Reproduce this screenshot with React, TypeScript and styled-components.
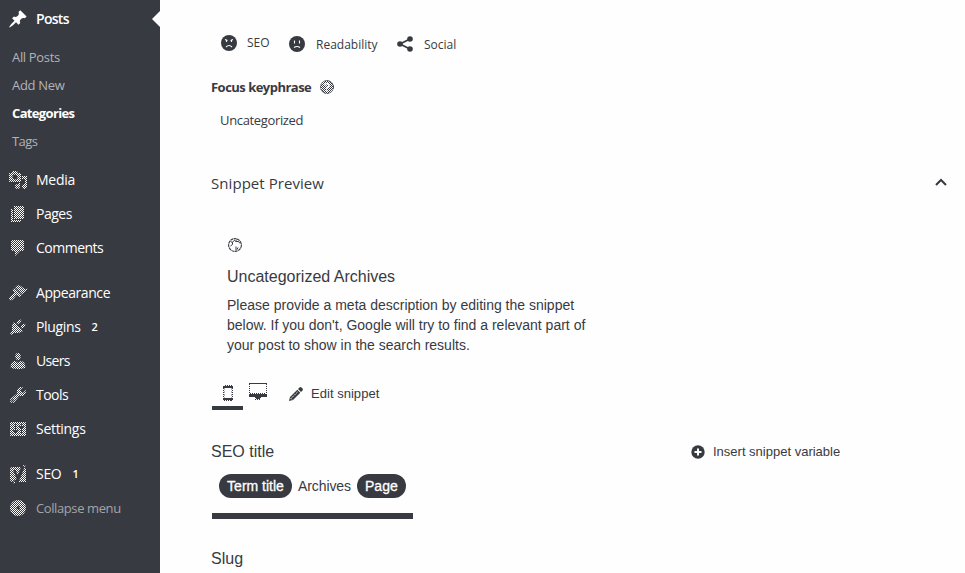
import React from 'react';
import styled, { createGlobalStyle } from 'styled-components';

const INK = '#383a42';
const UI = '"Open Sans", "Noto Sans", sans-serif';
const ARIAL = '"Liberation Sans", Arial, sans-serif';

const Global = createGlobalStyle`
  * { box-sizing: border-box; }
  body { margin: 0; background: #fefefe; color: ${INK}; overflow: hidden; }
  svg { display: block; flex: none; }
`;

const Page = styled.div`
  display: flex;
  width: 965px;
  height: 573px;
  overflow: hidden;
`;

const Sidebar = styled.nav`
  width: 160px;
  flex: none;
  padding-top: 2px;
  background: ${INK};
  color: #fff;
  font-family: ${UI};
`;

const MenuRow = styled.div<{ $dim?: boolean }>`
  display: flex;
  align-items: center;
  height: 34px;
  padding-left: 8px;
  gap: 8px;
  font-size: ${p => (p.$dim ? 13 : 14)}px;
  color: ${p => (p.$dim ? '#a3a4a8' : '#fff')};
`;

const Label = styled.span<{ $track?: number; $weight?: number }>`
  white-space: nowrap;
  line-height: 20px;
  letter-spacing: ${p => p.$track ?? 0}px;
  font-weight: ${p => p.$weight ?? 400};
`;

const Count = styled.span`
  margin-left: 3px;
  font-size: 11px;
  font-weight: 600;
  line-height: 20px;
`;

const Pointer = styled.span`
  margin-left: auto;
  border: 8px solid transparent;
  border-left: 0;
  border-right-color: #fefefe;
`;

const Submenu = styled.div`
  padding: 7px 0 8px 12px;
`;

const SubItem = styled.div<{ $active?: boolean; $track?: number }>`
  height: 28px;
  line-height: 28px;
  font-size: 13px;
  letter-spacing: ${p => p.$track ?? 0}px;
  font-weight: ${p => (p.$active ? 700 : 400)};
  color: ${p => (p.$active ? '#fff' : '#b2b3b6')};
`;

const Gap = styled.div`
  height: 11px;
`;

const Main = styled.main`
  flex: 1;
  padding: 32px 18px 0 51px;
`;

const Line = styled.div<{ $h: number; $top?: number; $left?: number; $gap?: number; $size?: number; $arial?: boolean }>`
  display: flex;
  align-items: center;
  height: ${p => p.$h}px;
  margin-top: ${p => p.$top ?? 0}px;
  padding-left: ${p => p.$left ?? 0}px;
  gap: ${p => p.$gap ?? 0}px;
  font-family: ${p => (p.$arial ? ARIAL : UI)};
  font-size: ${p => p.$size ?? 13}px;
`;

const Tab = styled.div<{ $gap: number; $lift?: number; $w: number }>`
  display: flex;
  align-items: center;
  gap: ${p => p.$gap}px;
  width: ${p => p.$w}px;
  padding-bottom: ${p => p.$lift ?? 0}px;
  font-size: 12px;

  ${Label} {
    padding-top: ${p => (p.$lift ? 0 : 1)}px;
  }
`;

const Spread = styled(Line)`
  justify-content: space-between;
`;

const ChevronBox = styled.span`
  padding-bottom: 3px;
`;

const Description = styled.p`
  width: 375px;
  margin: 7px 0 0 16px;
  font: 14px/20px ${ARIAL};
  white-space: nowrap;
`;

const Switcher = styled.div`
  display: flex;
  align-items: flex-start;
  height: 32px;
  margin-top: 23px;
`;

const ModeButton = styled.div<{ $on?: boolean }>`
  display: flex;
  justify-content: center;
  width: ${p => (p.$on ? 31 : 30)}px;
  height: 32px;
  margin-left: ${p => (p.$on ? 1 : 0)}px;
  padding-top: ${p => (p.$on ? 7 : 5)}px;
  border-bottom: 4px solid ${p => (p.$on ? INK : 'transparent')};
`;

const EditButton = styled.div`
  display: flex;
  align-items: center;
  gap: 8px;
  height: 32px;
  margin-left: 16px;
  font: 13px/20px ${ARIAL};
`;

const Insert = styled.div`
  display: flex;
  align-items: center;
  gap: 8px;
  width: 256px;
  font-size: 13px;
`;

const Pill = styled.span<{ $w: number }>`
  width: ${p => p.$w}px;
  height: 24px;
  border-radius: 12px;
  background: ${INK};
  color: #fff;
  text-align: center;
  font: 14px/24px ${ARIAL};
  -webkit-text-stroke: 0.3px #fff;
  white-space: nowrap;
`;

const Progress = styled.div`
  width: 201px;
  height: 6px;
  margin: 15px 0 0 1px;
  background: ${INK};
`;

const PATHS: Record<string, string> = {
  post: 'M10.44 3.02l1.82-1.82 6.36 6.35-1.83 1.82c-1.05-.68-2.48-.57-3.41.36l-.75.75c-.92.93-1.04 2.35-.35 3.41l-1.83 1.82-2.41-2.41-2.8 2.79c-.42.42-3.38 2.71-3.8 2.29s1.86-3.39 2.28-3.81l2.79-2.79L4.1 9.36l1.83-1.82c1.05.69 2.48.57 3.4-.36l.75-.75c.93-.92 1.05-2.35.36-3.41z',
  media: 'M13 11V4c0-.55-.45-1-1-1h-1.67L9 1H5L3.67 3H2c-.55 0-1 .45-1 1v7c0 .55.45 1 1 1h10c.55 0 1-.45 1-1zM7 4.5c1.38 0 2.5 1.12 2.5 2.5S8.38 9.5 7 9.5 4.5 8.38 4.5 7 5.62 4.5 7 4.5zM14 6h5v10.5c0 1.38-1.12 2.5-2.5 2.5S14 17.88 14 16.5s1.12-2.5 2.5-2.5c.17 0 .34.02.5.05V9h-3V6zm-4 8.05V13h2v3.5c0 1.38-1.12 2.5-2.5 2.5S7 17.88 7 16.5 8.12 14 9.5 14c.17 0 .34.02.5.05z',
  page: 'M6 15V2h10v13H6zm-1 1h8v2H3V5h2v11z',
  comments: 'M5 2h9c1.1 0 2 .9 2 2v7c0 1.1-.9 2-2 2h-2l-5 5v-5H5c-1.1 0-2-.9-2-2V4c0-1.1.9-2 2-2z',
  appearance: 'M14.48 11.06L7.41 3.99l1.5-1.5c.5-.56 2.3-.47 3.51.32 1.21.8 1.43 1.28 2.91 2.1 1.18.64 2.45 1.26 4.45.85zm-.71.71L6.7 4.7 4.93 6.47c-.39.39-.39 1.02 0 1.41l1.06 1.06c.39.39.39 1.03 0 1.42-.6.6-1.43 1.11-2.21 1.69-.35.26-.7.53-1.01.84C1.43 14.23.4 16.08 1.4 17.07c.99 1 2.84-.03 4.18-1.36.31-.31.58-.66.85-1.02.57-.78 1.08-1.61 1.69-2.21.39-.39 1.02-.39 1.41 0l1.06 1.06c.39.39 1.02.39 1.41 0z',
  plugins: 'M13.11 4.36L9.87 7.6 8 5.73l3.24-3.24c.35-.34 1.05-.2 1.56.32.52.51.66 1.21.31 1.55zm-8 1.77l.91-1.12 9.01 9.01-1.19.84c-.71.71-2.63 1.16-3.82 1.16H6.14L4.9 17.26c-.59.59-1.54.59-2.12 0-.59-.58-.59-1.53 0-2.12l1.24-1.24v-3.88c0-1.13.4-3.19 1.09-3.89zm7.26 3.97l3.24-3.24c.34-.35 1.04-.21 1.55.31.52.51.66 1.21.31 1.55l-3.24 3.25z',
  users: 'M10 9.25c-2.27 0-2.73-3.44-2.73-3.44C7 4.02 7.82 2 9.97 2c2.16 0 2.98 2.02 2.71 3.81 0 0-.41 3.44-2.68 3.44zm0 2.57L12.72 10c2.39 0 4.52 2.33 4.52 4.53v2.49s-3.65 1.13-7.24 1.13c-3.65 0-7.24-1.13-7.24-1.13v-2.49c0-2.25 1.94-4.48 4.47-4.48z',
  tools: 'M16.68 9.77c-1.34 1.34-3.3 1.67-4.95.99l-5.41 6.52c-.99.99-2.59.99-3.58 0s-.99-2.59 0-3.57l6.52-5.42c-.68-1.65-.35-3.61.99-4.95 1.28-1.28 3.12-1.62 4.72-1.06l-2.89 2.89 2.82 2.82 2.86-2.87c.53 1.58.18 3.39-1.08 4.65zM3.81 16.21c.4.39 1.04.39 1.43 0 .4-.4.4-1.04 0-1.43-.39-.4-1.03-.4-1.43 0-.39.39-.39 1.03 0 1.43z',
  settings: 'M18 16V4c0-.55-.45-1-1-1H3c-.55 0-1 .45-1 1v12c0 .55.45 1 1 1h14c.55 0 1-.45 1-1zM8 11h1c.55 0 1 .45 1 1s-.45 1-1 1H8v1.5c0 .28-.22.5-.5.5s-.5-.22-.5-.5V13H6c-.55 0-1-.45-1-1s.45-1 1-1h1V5.5c0-.28.22-.5.5-.5s.5.22.5.5V11zm5-2h-1c-.55 0-1-.45-1-1s.45-1 1-1h1V5.5c0-.28.22-.5.5-.5s.5.22.5.5V7h1c.55 0 1 .45 1 1s-.45 1-1 1h-1v5.5c0 .28-.22.5-.5.5s-.5-.22-.5-.5V9z',
  seo: 'M4.5 3H13l-3.300 8.500L7.500 6H5l3.500 8.300C8 15.800 7 16.500 5.500 16.500V18H4.500C3 18 2 17 2 15.500v-10C2 4 3 3 4.500 3zM14.800 1H17.500L11 17.200Q10.600 18 10 18H18V5.500Q18 4.300 17 3.600L14.800 1zM5.500 18h3l-2 1.500h-1z',
  collapse: 'M10 2a8 8 0 1 0 0 16 8 8 0 0 0 0-16zm1.500 10.500L8 10l3.500-2.500z',
};

const MenuIcon = ({ name }: { name: string }) => (
  <svg width="20" height="20" viewBox="0 0 20 20">
    <defs>
      <pattern id={`mesh-${name}`} width="2" height="2" patternUnits="userSpaceOnUse" shapeRendering="crispEdges">
        <path fill="#fff" d="M0 0h1v1H0zM1 1h1v1H1z" />
      </pattern>
    </defs>
    <path d={PATHS[name]} fillRule="evenodd" fill={name === 'post' ? '#fff' : `url(#mesh-${name})`} />
  </svg>
);

const Item = ({ icon, text, track, count, dim }: { icon: string; text: string; track?: number; count?: string; dim?: boolean }) => (
  <MenuRow $dim={dim}>
    <MenuIcon name={icon} />
    <Label $track={track}>{text}</Label>
    {count && <Count>{count}</Count>}
  </MenuRow>
);

const Face = ({ sad }: { sad?: boolean }) => (
  <svg width="16" height="16" viewBox="0 0 16 16">
    <circle cx="8" cy="8" r="8" fill={INK} />
    <path
      d={sad ? 'M4 4.500l2.500 1M12 4.500l-2.500 1M5.500 5.500v1.500M10.500 5.500v1.500M5 12q3-3 6 0' : 'M5.500 4.500v3M10.500 4.500v3M5 11.500q3-2 6 0'}
      fill="none"
      stroke="#fefefe"
      strokeWidth="1.100"
    />
  </svg>
);

const Share = () => (
  <svg width="16" height="16" viewBox="0 0 16 16">
    <path d="M13 3L3 8l10 5" fill="none" stroke={INK} strokeWidth="1.800" />
    <g fill={INK}>
      <circle cx="13" cy="3" r="2.800" />
      <circle cx="3" cy="8" r="2.800" />
      <circle cx="13" cy="13" r="2.800" />
    </g>
  </svg>
);

const Help = () => (
  <svg width="14" height="14" viewBox="0 0 14 14">
    <defs>
      <pattern id="mesh-help" width="2" height="2" patternUnits="userSpaceOnUse" shapeRendering="crispEdges">
        <path fill={INK} d="M0 0h1v1H0zM1 1h1v1H1z" />
      </pattern>
    </defs>
    <circle cx="7" cy="7" r="6.500" fill="url(#mesh-help)" stroke={INK} strokeWidth=".9" strokeDasharray="2 .7" />
    <path d="M5 5.500Q5 3.500 7 3.500T9 5.500Q9 6.500 7 7.500V9M7 10v1.500" fill="none" stroke="#fefefe" strokeWidth="1.400" />
  </svg>
);

const Globe = () => (
  <svg width="14" height="14" viewBox="0 0 14 14" fill="none" stroke={INK}>
    <circle cx="7" cy="7" r="6.400" strokeWidth="1.100" strokeDasharray="3 .5" />
    <path d="M2.500 3.500l2 1 1-1.500 1.500-1M4.500 4.500v2L2.500 8M8.500 1.500l-1 2h3l1.500 2M8 8.500v4M10 9.500l-1 2" strokeWidth="1" />
  </svg>
);

const Phone = () => (
  <svg width="10" height="16" viewBox="0 0 10 16">
    <path fill={INK} d="M1 0h8v1h1v2H0V1h1zM0 13h10v2H9v1H1v-1H0z" />
    <path d="M.5 3v10M9.500 3v10" stroke={INK} strokeDasharray="1 1" />
    <path d="M1.500 3.500v9.500M8.500 3.500v9.500" stroke={INK} strokeDasharray="1 2" strokeWidth=".8" />
    <path d="M1 .5h8M2 15.500h6" stroke="#fefefe" strokeDasharray="1 1" />
  </svg>
);

const Desktop = () => (
  <svg width="18" height="17" viewBox="0 0 18 17">
    <path fill={INK} d="M0 0h18v1H0zM0 11h18v3H0zM6 14h6v1H6zM7 15h4v1H7z" />
    <path d="M.5 1v10M17.500 1v10M1 10.500h16M6 16.500h6" stroke={INK} strokeDasharray="1 1" />
  </svg>
);

const Pencil = () => (
  <svg width="14" height="14" viewBox="0 0 14 14">
    <path fill={INK} d="M10.500 0.500q1-.8 2 0l1 1q.8 1 0 2L12 5 9 2zM8.300 2.700l3 3L4 13l-4 1 1-4z" />
    <path d="M3 10.500l5.500-5.500M1.500 11l1.500 1.500" stroke="#fefefe" strokeWidth=".9" strokeDasharray="2 1" />
  </svg>
);

const Plus = () => (
  <svg width="14" height="14" viewBox="0 0 14 14">
    <circle cx="7" cy="7" r="6.700" fill={INK} />
    <path d="M7 3.500v7M3.500 7h7" stroke="#fefefe" strokeWidth="2" />
  </svg>
);

const Chevron = () => (
  <svg width="12" height="8" viewBox="0 0 12 8">
    <path d="M1 7l5-5 5 5" fill="none" stroke={INK} strokeWidth="2" />
  </svg>
);

export default function App() {
  return (
    <Page>
      <Global />
      <Sidebar>
        <MenuRow>
          <MenuIcon name="post" />
          <Label $weight={600} $track={-0.7}>Posts</Label>
          <Pointer />
        </MenuRow>
        <Submenu>
          <SubItem $track={-0.33}>All Posts</SubItem>
          <SubItem $track={-0.3}>Add New</SubItem>
          <SubItem $active $track={-0.65}>Categories</SubItem>
          <SubItem $track={-0.6}>Tags</SubItem>
        </Submenu>
        <Item icon="media" text="Media" track={-0.25} />
        <Item icon="page" text="Pages" track={-0.5} />
        <Item icon="comments" text="Comments" track={-0.5} />
        <Gap />
        <Item icon="appearance" text="Appearance" track={-0.42} />
        <Item icon="plugins" text="Plugins" count="2" track={-0.35} />
        <Item icon="users" text="Users" track={-0.65} />
        <Item icon="tools" text="Tools" track={-0.55} />
        <Item icon="settings" text="Settings" track={-0.3} />
        <Gap />
        <Item icon="seo" text="SEO" count="1" track={-0.3} />
        <Item icon="collapse" text="Collapse menu" track={-0.4} dim />
      </Sidebar>
      <Main>
        <Line $h={24} $left={10}>
          <Tab $gap={10} $lift={3} $w={68}><Face sad /><Label>SEO</Label></Tab>
          <Tab $gap={11} $w={108}><Face /><Label>Readability</Label></Tab>
          <Tab $gap={11} $w={70}><Share /><Label>Social</Label></Tab>
        </Line>
        <Line $h={20} $top={21} $gap={9}><Label $weight={700} $track={-0.52}>Focus keyphrase</Label><Help /></Line>
        <Line $h={20} $top={13} $left={9}><Label $track={-0.35}>Uncategorized</Label></Line>
        <Spread $h={24} $top={41} $size={15}>
          <Label $track={0.06}>Snippet Preview</Label>
          <ChevronBox><Chevron /></ChevronBox>
        </Spread>
        <Line $h={14} $top={43} $left={17}><Globe /></Line>
        <Line $h={22} $top={14} $left={16} $size={16} $arial><Label>Uncategorized Archives</Label></Line>
        <Description>
          Please provide a meta description by editing the snippet<br />
          below. If you don't, Google will try to find a relevant part of<br />
          your post to show in the search results.
        </Description>
        <Switcher>
          <ModeButton $on><Phone /></ModeButton>
          <ModeButton><Desktop /></ModeButton>
          <EditButton><Pencil /><Label $track={0.03}>Edit snippet</Label></EditButton>
        </Switcher>
        <Spread $h={24} $top={30} $size={16} $arial>
          <Label>SEO title</Label>
          <Insert><Plus /><Label>Insert snippet variable</Label></Insert>
        </Spread>
        <Line $h={24} $top={10} $left={8} $gap={6} $size={14} $arial>
          <Pill $w={73}>Term title</Pill><Label $track={-0.1}>Archives</Label><Pill $w={49}>Page</Pill>
        </Line>
        <Progress />
        <Line $h={24} $top={28} $size={16} $arial><Label>Slug</Label></Line>
      </Main>
    </Page>
  );
}
